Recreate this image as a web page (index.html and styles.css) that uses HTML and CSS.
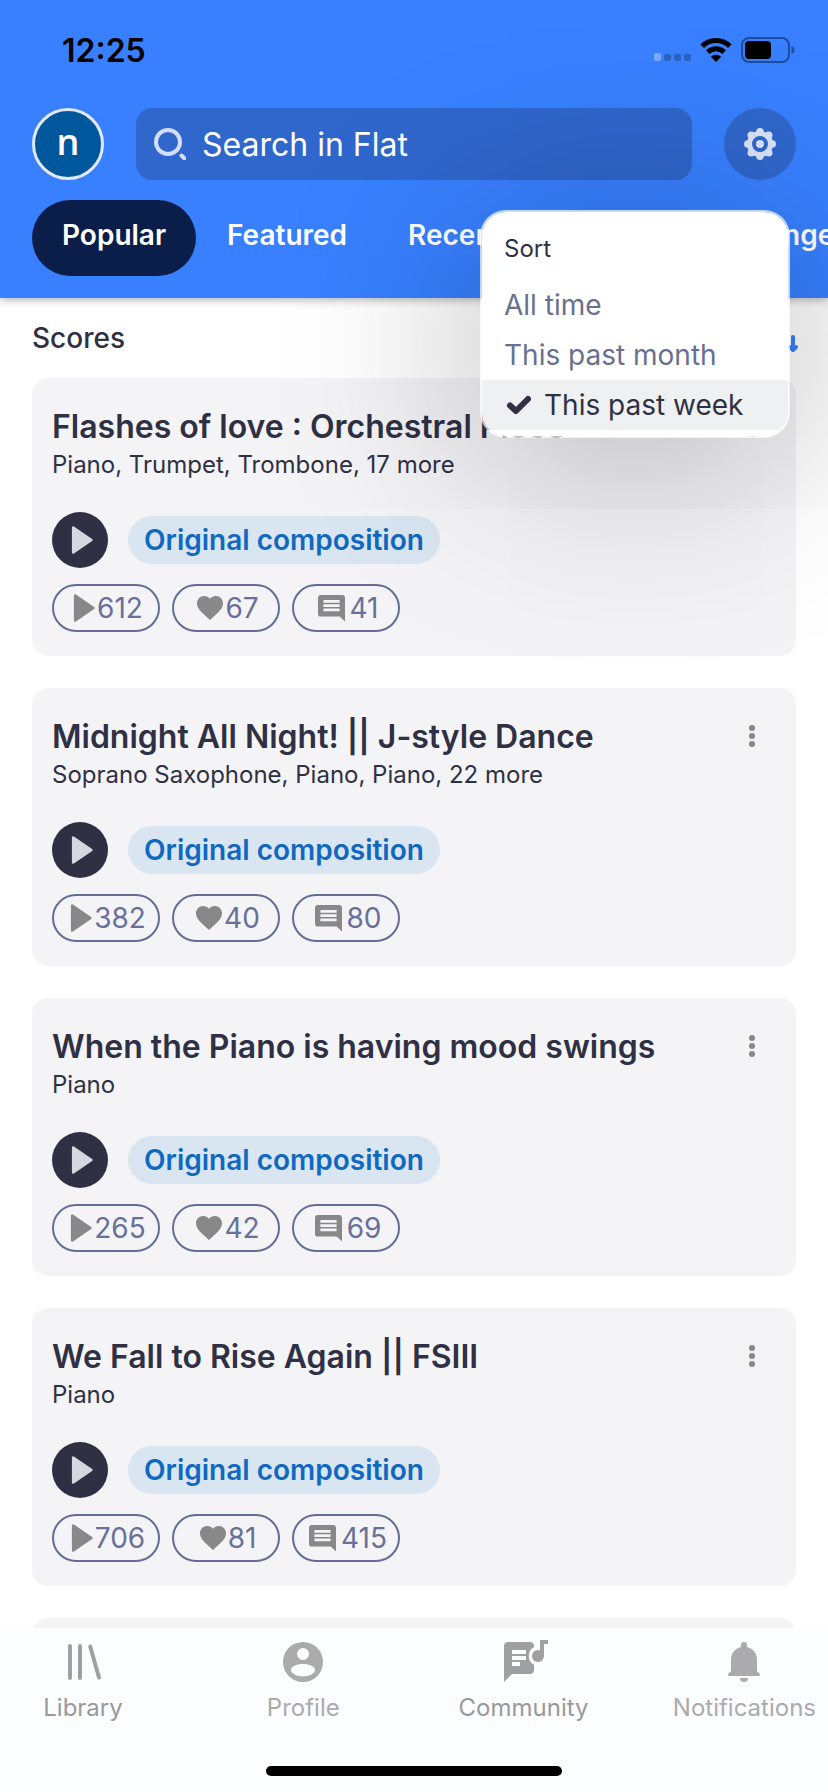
FILE: index.html
```
<!DOCTYPE html>
<html lang="en">
<head>
<meta charset="utf-8">
<meta name="viewport" content="width=device-width, initial-scale=1">
<title>Flat - Community</title>
<link rel="stylesheet" href="styles.css">
</head>
<body>
<svg class="sprite" aria-hidden="true">
  <symbol id="i-play" viewBox="0 0 22 28"><path d="M2.200 1.600v24.800L20.400 14z" fill="currentColor" stroke="currentColor" stroke-width="2.600" stroke-linejoin="round"/></symbol>
  <symbol id="i-heart" viewBox="0 0 26 24"><path d="M13 24l-1.900-1.700C4.400 16.300 0 12.400 0 7.300 0 3.100 3.200 0 7.200 0 9.400 0 11.600 1 13 2.700 14.400 1 16.600 0 18.800 0 22.800 0 26 3.100 26 7.300c0 5.100-4.400 9-11.100 15z" fill="currentColor"/></symbol>
  <symbol id="i-comment" viewBox="0 0 27 27"><path fill="currentColor" fill-rule="evenodd" d="M2.700 0h21.600C25.800 0 27 1.200 27 2.700V26.500L21.600 21.600H2.700C1.200 21.600 0 20.400 0 18.900V2.700C0 1.200 1.200 0 2.700 0zM5.400 5v2.800h16.200V5zM5.400 9.200v2.800h16.200V9.200zM5.400 13.400v2.800h16.200v-2.800z"/></symbol>
  <symbol id="i-more" viewBox="0 0 6 22"><g fill="currentColor"><circle cx="3" cy="3" r="3"/><circle cx="3" cy="11" r="3"/><circle cx="3" cy="19" r="3"/></g></symbol>
</svg>
<div class="app">
  <header class="header">
    <div class="status">
      <span class="time">12:25</span>
      <div class="status-icons">
        <svg width="37" height="8" viewBox="0 0 37 8" class="signal" aria-hidden="true"><rect width="7" height="8" rx="2" fill="#7aaaff"/><g fill="#2a62c4"><rect x="10" y="1" width="7" height="7" rx="2"/><rect x="20" y="1" width="7" height="7" rx="2"/><rect x="30" y="1" width="7" height="7" rx="2"/></g></svg>
        <svg width="32" height="24" viewBox="0 0 32 24" aria-hidden="true"><path d="M2.200 8.200a19.600 19.600 0 0 1 27.600 0M7.800 14.100a11.800 11.800 0 0 1 16.400 0" fill="none" stroke="#000" stroke-width="5"/><path d="M16 24l-5.200-5.200a7.400 7.400 0 0 1 10.400 0z"/></svg>
        <svg width="54" height="26" viewBox="0 0 54 26" aria-hidden="true"><rect x="1" y="1" width="47" height="24" rx="7" fill="none" stroke="#1f4c9c" stroke-width="2"/><rect x="4" y="4" width="26" height="18" rx="4"/><path d="M50.500 9c4 1.600 4 6.400 0 8z" fill="#1f4c9c"/></svg>
      </div>
    </div>
    <div class="topbar">
      <button class="avatar" type="button" aria-label="Your profile">n</button>
      <label class="search">
        <svg width="32" height="32" viewBox="0 0 32 32" aria-hidden="true"><circle cx="14" cy="14" r="12" fill="none" stroke="currentColor" stroke-width="4"/><path d="M27.500 27.500l3 3" stroke="currentColor" stroke-width="4" stroke-linecap="round"/></svg>
        <input class="search-input" type="search" placeholder="Search in Flat" aria-label="Search in Flat">
      </label>
      <button class="settings" type="button" aria-label="Settings">
        <svg width="32" height="32" viewBox="-16 -16 32 32" aria-hidden="true"><circle r="10.500" fill="none" stroke="currentColor" stroke-width="5"/><circle r="4" fill="currentColor"/><g fill="currentColor"><circle cy="-12.200" r="3.800"/><circle cy="12.200" r="3.800"/><circle cx="-12.200" r="3.800"/><circle cx="12.200" r="3.800"/><circle cx="8.700" cy="8.700" r="3.800"/><circle cx="-8.700" cy="8.700" r="3.800"/><circle cx="8.700" cy="-8.700" r="3.800"/><circle cx="-8.700" cy="-8.700" r="3.800"/></g></svg>
      </button>
    </div>
    <nav class="tabs" aria-label="Score lists">
      <a class="tab tab-active" href="#popular">Popular</a>
      <a class="tab" href="#featured">Featured</a>
      <a class="tab" href="#recent">Recently created</a>
      <a class="tab" href="#challenges">Challenges</a>
    </nav>
  </header>

  <main class="content">
    <div class="list-head">
      <h1 class="list-title">Scores</h1>
      <button class="sort" type="button" aria-label="Sort scores">
        <svg width="40" height="24" viewBox="0 0 40 24" fill="none" stroke="currentColor" stroke-width="4" stroke-linecap="round" stroke-linejoin="round" aria-hidden="true"><path d="M20 18V6M17 9l3-3 3 3M33 6v13M30 16l3 3 3-3"/></svg>
      </button>
    </div>

    <article class="card">
      <div class="card-head"><h2 class="card-title">Flashes of love : Orchestral Piece</h2><button class="more" type="button" aria-label="More"><svg width="6" height="22"><use href="#i-more"/></svg></button></div>
      <p class="parts">Piano, Trumpet, Trombone, 17 more</p>
      <div class="actions"><button class="play" type="button" aria-label="Play"><svg width="22" height="28"><use href="#i-play"/></svg></button><span class="badge">Original composition</span></div>
      <div class="stats">
        <span class="stat"><svg class="s-play" width="22" height="28"><use href="#i-play"/></svg>612</span>
        <span class="stat"><svg class="s-heart" width="26" height="24"><use href="#i-heart"/></svg>67</span>
        <span class="stat"><svg class="s-comment" width="27" height="27"><use href="#i-comment"/></svg>41</span>
      </div>
    </article>

    <article class="card">
      <div class="card-head"><h2 class="card-title">Midnight All Night! || J-style Dance</h2><button class="more" type="button" aria-label="More"><svg width="6" height="22"><use href="#i-more"/></svg></button></div>
      <p class="parts">Soprano Saxophone, Piano, Piano, 22 more</p>
      <div class="actions"><button class="play" type="button" aria-label="Play"><svg width="22" height="28"><use href="#i-play"/></svg></button><span class="badge">Original composition</span></div>
      <div class="stats">
        <span class="stat"><svg class="s-play" width="22" height="28"><use href="#i-play"/></svg>382</span>
        <span class="stat"><svg class="s-heart" width="26" height="24"><use href="#i-heart"/></svg>40</span>
        <span class="stat"><svg class="s-comment" width="27" height="27"><use href="#i-comment"/></svg>80</span>
      </div>
    </article>

    <article class="card">
      <div class="card-head"><h2 class="card-title">When the Piano is having mood swings</h2><button class="more" type="button" aria-label="More"><svg width="6" height="22"><use href="#i-more"/></svg></button></div>
      <p class="parts">Piano</p>
      <div class="actions"><button class="play" type="button" aria-label="Play"><svg width="22" height="28"><use href="#i-play"/></svg></button><span class="badge">Original composition</span></div>
      <div class="stats">
        <span class="stat"><svg class="s-play" width="22" height="28"><use href="#i-play"/></svg>265</span>
        <span class="stat"><svg class="s-heart" width="26" height="24"><use href="#i-heart"/></svg>42</span>
        <span class="stat"><svg class="s-comment" width="27" height="27"><use href="#i-comment"/></svg>69</span>
      </div>
    </article>

    <article class="card">
      <div class="card-head"><h2 class="card-title">We Fall to Rise Again || FSIII</h2><button class="more" type="button" aria-label="More"><svg width="6" height="22"><use href="#i-more"/></svg></button></div>
      <p class="parts">Piano</p>
      <div class="actions"><button class="play" type="button" aria-label="Play"><svg width="22" height="28"><use href="#i-play"/></svg></button><span class="badge">Original composition</span></div>
      <div class="stats">
        <span class="stat"><svg class="s-play" width="22" height="28"><use href="#i-play"/></svg>706</span>
        <span class="stat"><svg class="s-heart" width="26" height="24"><use href="#i-heart"/></svg>81</span>
        <span class="stat"><svg class="s-comment" width="27" height="27"><use href="#i-comment"/></svg>415</span>
      </div>
    </article>

    <article class="card card-next"></article>
  </main>

  <footer class="bottom">
    <nav class="nav" aria-label="Main">
      <a class="nav-item" href="#library">
        <svg width="40" height="44" viewBox="0 0 40 44" fill="none" stroke="currentColor" stroke-width="4" stroke-linecap="round" aria-hidden="true"><path d="M7 6v32M17 6v32M27.200 6.500L36 37.500"/></svg>
        Library</a>
      <a class="nav-item nav-light" href="#profile">
        <svg width="40" height="44" viewBox="0 0 40 44" fill="currentColor" aria-hidden="true"><path fill-rule="evenodd" d="M20 2a20 20 0 1 0 0 40a20 20 0 1 0 0-40zM20 8a6 6 0 1 1 0 12a6 6 0 1 1 0-12zM20 24c6.600 0 12 2.400 12 6s-5.400 6.400-12 6.400S8 33.600 8 30s5.400-6 12-6z"/></svg>
        Profile</a>
      <a class="nav-item" href="#community">
        <svg width="48" height="44" viewBox="0 0 48 44" fill="currentColor" aria-hidden="true"><path fill-rule="evenodd" d="M8 2h22c2.200 0 4 1.500 4 4v1.200a10 10 0 0 0 0 17.600V30c0 2.500-1.800 4-4 4H12l-8 8V6c0-2.500 1.800-4 4-4zM12 10v4h14v-4zM12 16v4h14v-4zM12 22v4h8v-4z"/><circle cx="38" cy="16" r="6"/><path d="M40 0h8v4h-4v12h-4z"/></svg>
        Community</a>
      <a class="nav-item nav-light" href="#notifications">
        <svg width="40" height="44" viewBox="0 0 40 44" fill="currentColor" aria-hidden="true"><path d="M20 2a3 3 0 0 1 3 3v2c6 1.600 10 6 10 13v11l2.500 2.500c1.200 1.400.2 2.500-1.200 2.500H5.700c-1.400 0-2.400-1.100-1.200-2.500L7 31V20C7 13 11 8.600 17 7V5a3 3 0 0 1 3-3zM16 38h8c0 2.400-1.800 4-4 4s-4-1.600-4-4z"/></svg>
        Notifications</a>
    </nav>
    <div class="home-indicator"></div>
  </footer>

  <div class="menu" role="menu" aria-labelledby="menu-title">
    <p class="menu-title" id="menu-title">Sort</p>
    <button class="menu-item" type="button" role="menuitemradio" aria-checked="false">All time</button>
    <button class="menu-item" type="button" role="menuitemradio" aria-checked="false">This past month</button>
    <button class="menu-item menu-item-on" type="button" role="menuitemradio" aria-checked="true"><svg width="28" height="20" viewBox="0 0 28 20" fill="none" stroke="currentColor" stroke-width="6" stroke-linecap="round" stroke-linejoin="round" aria-hidden="true"><path d="M6 10.500l6 5.500L24 4"/></svg>This past week</button>
  </div>
</div>
</body>
</html>
```
FILE: styles.css
```
* {
  box-sizing: border-box;
}

body {
  margin: 0;
  background: #fff;
  color: #2f3044;
  font-family: Inter, "Liberation Sans", sans-serif;
}

h1, h2, p {
  margin: 0;
}

button, input {
  margin: 0;
  padding: 0;
  border: 0;
  background: none;
  color: inherit;
  font: inherit;
}

a {
  color: inherit;
  text-decoration: none;
}

svg {
  flex: none;
}

.sprite {
  position: absolute;
  width: 0;
  height: 0;
}

.app {
  position: relative;
  display: flex;
  flex-direction: column;
  height: 100vh;
  overflow: hidden;
}

/* Header */
.header {
  position: relative;
  z-index: 1;
  flex: none;
  padding-bottom: 22px;
  background: #3880ff;
  box-shadow: 0 2px 8px rgba(0, 0, 0, 0.3);
}

.status {
  display: flex;
  align-items: center;
  justify-content: space-between;
  height: 100px;
  padding: 0 33px 0 62px;
  color: #000;
}

.time {
  font-size: 32px;
  font-weight: 600;
}

.status-icons {
  display: flex;
  align-items: center;
  gap: 9px;
}

.signal {
  margin-top: 14px;
}

.topbar {
  display: flex;
  gap: 32px;
  padding: 8px 32px 0;
}

.avatar {
  flex: none;
  width: 72px;
  height: 72px;
  padding-bottom: 6px;
  border: 3px solid #e1e9f8;
  border-radius: 50%;
  background: #00579c;
  color: #fff;
  font: 600 36px "Open Sans", sans-serif;
}

.search {
  display: flex;
  flex: 1;
  align-items: center;
  gap: 16px;
  min-width: 0;
  padding: 0 18px;
  border-radius: 16px;
  background: rgba(38, 64, 128, 0.4);
  color: #d3defa;
}

.search-input {
  flex: 1;
  min-width: 0;
  height: 48px;
  color: #fff;
  font-size: 32px;
  outline: 0;
}

.search-input::placeholder {
  color: #fff;
  opacity: 1;
}

.settings {
  display: flex;
  flex: none;
  align-items: center;
  justify-content: center;
  width: 72px;
  height: 72px;
  border-radius: 50%;
  background: rgba(38, 64, 128, 0.4);
  color: #d9e4fa;
}

.tabs {
  display: flex;
  gap: 1px;
  padding: 20px 32px 0;
  overflow: hidden;
}

.tab {
  display: flex;
  flex: none;
  align-items: center;
  height: 76px;
  padding: 0 30px 6px;
  border-radius: 38px;
  color: #fff;
  font-size: 28px;
  font-weight: 600;
}

.tab-active {
  background: #0a1e49;
}

/* Score list */
.content {
  flex: 1;
  min-height: 0;
  padding: 0 32px;
  overflow: hidden;
}

.list-head {
  display: flex;
  align-items: center;
  justify-content: space-between;
  height: 80px;
}

.list-title {
  font-size: 28px;
  font-weight: 500;
}

.sort {
  display: flex;
  margin-right: -4px;
  padding-top: 10px;
  color: #3880ff;
}

.card {
  margin-bottom: 32px;
  padding: 29px 20px 24px;
  border-radius: 16px;
  background: #f4f4f7;
}

.card-next {
  min-height: 278px;
}

.card-head {
  display: flex;
  justify-content: space-between;
}

.card-title {
  font-size: 32px;
  font-weight: 600;
  line-height: 40px;
}

.more {
  display: flex;
  flex: none;
  align-items: center;
  justify-content: center;
  width: 48px;
  height: 38px;
  color: #888;
}

.parts {
  margin-top: 4px;
  font-size: 24px;
  line-height: 28px;
}

.actions {
  display: flex;
  align-items: center;
  gap: 20px;
  margin-top: 33px;
}

.play {
  display: flex;
  align-items: center;
  justify-content: center;
  width: 56px;
  height: 56px;
  padding-left: 4px;
  border-radius: 50%;
  background: #2f3044;
  color: #d6d7df;
}

.badge {
  padding: 0 16px;
  border-radius: 24px;
  background: #d9e6f1;
  color: #1068c0;
  font-size: 28px;
  font-weight: 600;
  line-height: 48px;
}

.stats {
  display: flex;
  gap: 12px;
  margin-top: 16px;
}

.stat {
  display: flex;
  align-items: center;
  justify-content: center;
  min-width: 108px;
  height: 48px;
  padding-left: 4px;
  border: 2px solid #646d93;
  border-radius: 24px;
  color: #68709a;
  font-size: 28px;
}

.s-play,
.s-heart,
.s-comment {
  color: #888;
}

.s-play,
.s-heart {
  margin-right: 2px;
}

.s-comment {
  margin-right: 5px;
}

/* Bottom navigation */
.bottom {
  flex: none;
  padding: 12px 0 16px;
  background: #fcfdff;
}

.nav {
  display: flex;
  justify-content: space-between;
  padding: 0 12px;
}

.nav-item {
  display: flex;
  flex-direction: column;
  align-items: center;
  gap: 10px;
  min-width: 142px;
  color: #999;
  font-size: 24px;
  line-height: 28px;
}

.nav-item svg {
  color: #a0a0a1;
}

.nav-light,
.nav-light svg {
  color: #ababad;
}

.home-indicator {
  width: 296px;
  height: 10px;
  margin: 44px auto 0;
  border-radius: 5px;
  background: #000;
}

/* Sort menu, floating over the list */
.menu {
  position: absolute;
  z-index: 2;
  top: 210px;
  right: 38px;
  width: 310px;
  padding-bottom: 6px;
  overflow: hidden;
  border: 2px solid rgba(255, 255, 255, 0.7);
  border-radius: 26px;
  background: #fff;
  background-clip: padding-box;
  box-shadow: 0 20px 200px rgba(0, 0, 0, 0.32);
}

.menu-title {
  padding: 23px 22px 17px;
  font-size: 24px;
  line-height: 28px;
}

.menu-item {
  display: flex;
  align-items: center;
  gap: 12px;
  width: 100%;
  height: 50px;
  padding: 0 22px;
  color: #68708f;
  font-size: 28px;
}

.menu-item-on {
  background: #eff0f2;
  color: #2f3044;
}
```
